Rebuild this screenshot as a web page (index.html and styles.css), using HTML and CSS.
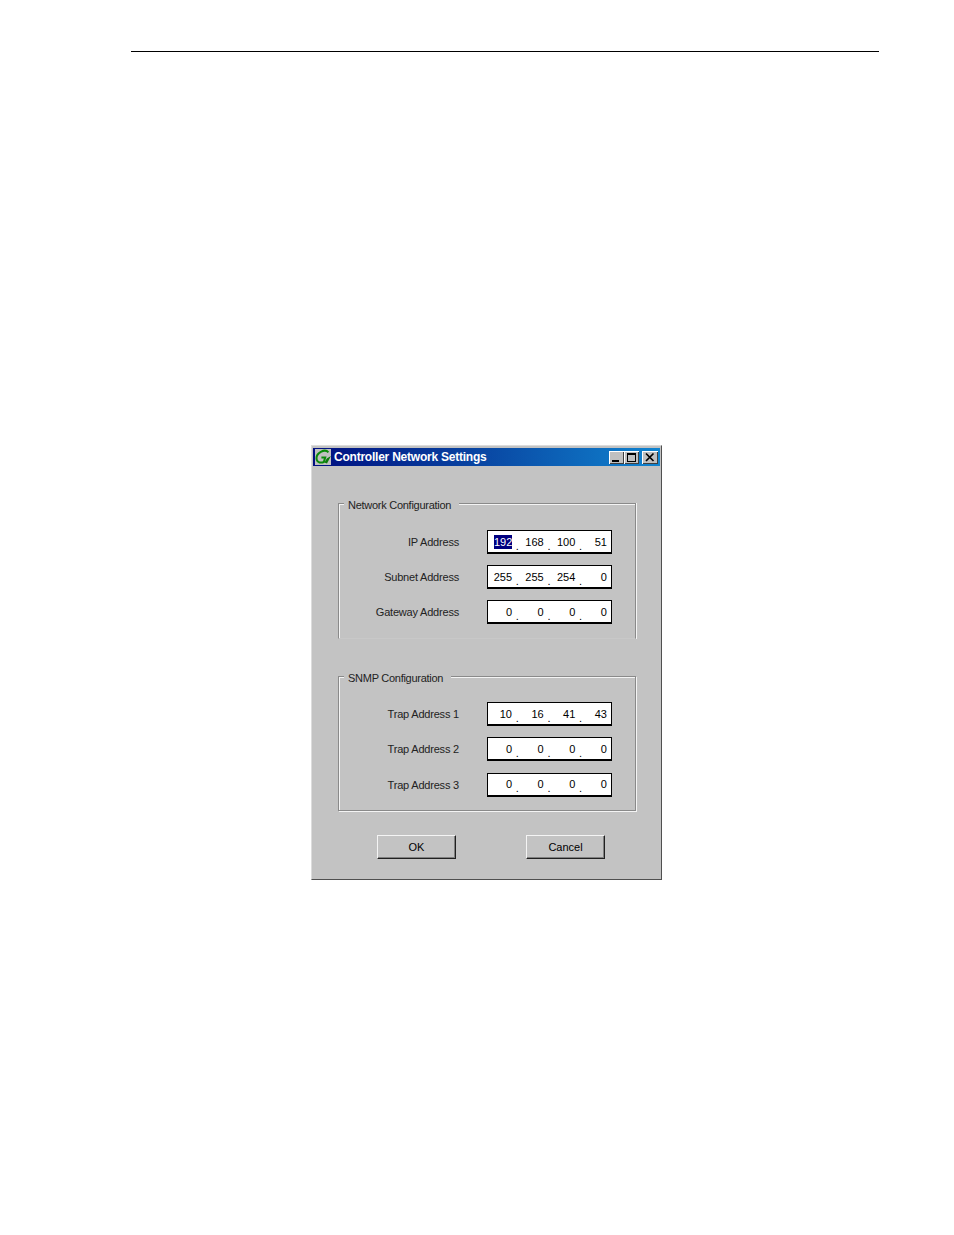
FILE: index.html
```html
<!DOCTYPE html>
<html lang="en">
<head>
<meta charset="utf-8">
<title>Controller Network Settings</title>
<link rel="stylesheet" href="styles.css">
</head>
<body>
<div class="page-rule"></div>
<div class="dialog">
  <div class="titlebar">
    <svg class="app-icon" viewBox="0 0 16 16" width="16" height="16" aria-hidden="true">
      <rect width="16" height="16" fill="#c0c0c0"/>
      <path d="M13.4 3.4C11.8 1.4 8.5 1.4 5.8 2.8 2.6 4.6 1 8 1.8 11 2.5 13.6 6 14.2 8.8 13L10.2 8.6H6.4" fill="none" stroke="#0a8a0a" stroke-width="2"/>
      <path d="M9.4 13.6 11.8 9.4 15.9 7 12 14.6Z" fill="#0a7a0a"/>
    </svg>
    <span class="title-text">Controller Network Settings</span>
    <div class="caption-buttons">
      <span class="cap-btn"><svg viewBox="0 0 15 13" width="15" height="13"><rect x="3" y="9" width="7" height="2" fill="#000"/></svg></span>
      <span class="cap-btn"><svg viewBox="0 0 15 13" width="15" height="13"><path d="M3 2H12V11H3ZM4 4V10H11V4Z" fill="#000" fill-rule="evenodd"/></svg></span>
      <span class="cap-btn cap-close"><svg viewBox="0 0 16 13" width="16" height="13"><path d="M4 2.5 11.5 10M11.5 2.5 4 10" stroke="#000" stroke-width="1.7" fill="none"/></svg></span>
    </div>
  </div>
  <div class="dialog-body">
    <section class="group group-network">
      <h2 class="legend">Network Configuration</h2>
      <div class="row"><span class="label">IP Address</span><div class="field"><span class="octet"><span class="selected">192</span></span><span class="dot">.</span><span class="octet">168</span><span class="dot">.</span><span class="octet">100</span><span class="dot">.</span><span class="octet">51</span></div></div>
      <div class="row"><span class="label">Subnet Address</span><div class="field"><span class="octet">255</span><span class="dot">.</span><span class="octet">255</span><span class="dot">.</span><span class="octet">254</span><span class="dot">.</span><span class="octet">0</span></div></div>
      <div class="row"><span class="label">Gateway Address</span><div class="field"><span class="octet">0</span><span class="dot">.</span><span class="octet">0</span><span class="dot">.</span><span class="octet">0</span><span class="dot">.</span><span class="octet">0</span></div></div>
    </section>
    <section class="group group-snmp">
      <h2 class="legend">SNMP Configuration</h2>
      <div class="row"><span class="label">Trap Address 1</span><div class="field"><span class="octet">10</span><span class="dot">.</span><span class="octet">16</span><span class="dot">.</span><span class="octet">41</span><span class="dot">.</span><span class="octet">43</span></div></div>
      <div class="row"><span class="label">Trap Address 2</span><div class="field"><span class="octet">0</span><span class="dot">.</span><span class="octet">0</span><span class="dot">.</span><span class="octet">0</span><span class="dot">.</span><span class="octet">0</span></div></div>
      <div class="row"><span class="label">Trap Address 3</span><div class="field"><span class="octet">0</span><span class="dot">.</span><span class="octet">0</span><span class="dot">.</span><span class="octet">0</span><span class="dot">.</span><span class="octet">0</span></div></div>
    </section>
    <div class="actions">
      <button class="btn" type="button">OK</button>
      <button class="btn" type="button">Cancel</button>
    </div>
  </div>
</div>
</body>
</html>
```
FILE: styles.css
```css
* { box-sizing: border-box; }
html, body { margin: 0; padding: 0; background: #fff; }
body {
  height: 1235px;
  padding-top: 51px;
  font-family: "Liberation Sans", Arial, sans-serif;
  font-size: 11px;
  color: #000;
  overflow: hidden;
}
.page-rule {
  width: 748px;
  height: 1px;
  margin-left: 131px;
  background: #000;
}
.dialog {
  width: 351px;
  height: 435px;
  margin: 393px 0 0 311px;
  padding: 2px 1px 1px 1px;
  background: #c3c3c3;
  border: 1px solid;
  border-color: #dcdcdc #505050 #505050 #dcdcdc;
  display: flex;
  flex-direction: column;
  opacity: 0.999;
}
.titlebar {
  height: 18px;
  flex: none;
  display: flex;
  align-items: center;
  padding: 0 2px 0 2px;
  background: linear-gradient(90deg, #000f80 0%, #0a4ea8 55%, #1084d0 100%);
}
.app-icon { flex: none; margin-right: 3px; }
.title-text {
  flex: 1;
  color: #fff;
  font-weight: bold;
  font-size: 12px;
  letter-spacing: -0.23px;
  white-space: nowrap;
}
.caption-buttons { display: flex; align-items: center; }
.cap-btn {
  width: 15px;
  height: 13px;
  display: block;
  background: #c0c0c0;
  box-shadow: inset 1px 1px 0 #fff, inset -1px -1px 0 #404040;
}
.cap-btn svg { display: block; }
.cap-close { width: 16px; margin-left: 3px; }
.dialog-body {
  flex: 1;
  display: flex;
  flex-direction: column;
  padding: 37px 25px 0 25px;
}
.group {
  position: relative;
  width: 298px;
  border: 1px solid #8a8a8a;
  box-shadow: 1px 1px 0 #f4f4f4, inset 1px 1px 0 #f4f4f4;
  display: flex;
  flex-direction: column;
  padding: 26px 23px 0 0;
}
.group-network { height: 136px; gap: 11px; border-bottom-color: #c8c8c8; box-shadow: 1px 0 0 #f4f4f4, inset 1px 1px 0 #f4f4f4; }
.group-snmp { height: 135px; margin-top: 37px; padding-top: 25px; gap: 11.25px; }
.legend {
  position: absolute;
  top: -5px;
  left: 5px;
  margin: 0;
  padding: 0 8px 0 4px;
  background: #c3c3c3;
  font: inherit;
  line-height: 13px;
  letter-spacing: -0.27px;
  color: #222;
  white-space: nowrap;
}
.row {
  display: flex;
  align-items: center;
  justify-content: flex-end;
  height: 24px;
  gap: 28px;
}
.label { color: #222; letter-spacing: -0.2px; white-space: nowrap; }
.field {
  width: 125px;
  height: 24px;
  display: flex;
  align-items: center;
  background: #fff;
  border: 1px solid #000;
  border-width: 1px 1px 2px 1px;
}
.octet { width: 24px; text-align: right; flex: none; line-height: 14px; }
.selected { background: #000080; color: #fff; display: inline-block; width: 18px; text-align: center; }
.dot { width: 7.67px; padding-left: 3px; flex: none; text-align: center; line-height: 14px; position: relative; top: 4px; }
.actions {
  display: flex;
  margin-top: 24px;
  padding-left: 39px;
  gap: 70px;
}
.btn {
  width: 79px;
  height: 24px;
  padding: 0;
  font: inherit;
  color: #000;
  background: #c3c3c3;
  border: 1px solid;
  border-color: #f4f4f4 #202020 #202020 #f4f4f4;
  box-shadow: inset -1px -1px 0 #808080;
}
```
